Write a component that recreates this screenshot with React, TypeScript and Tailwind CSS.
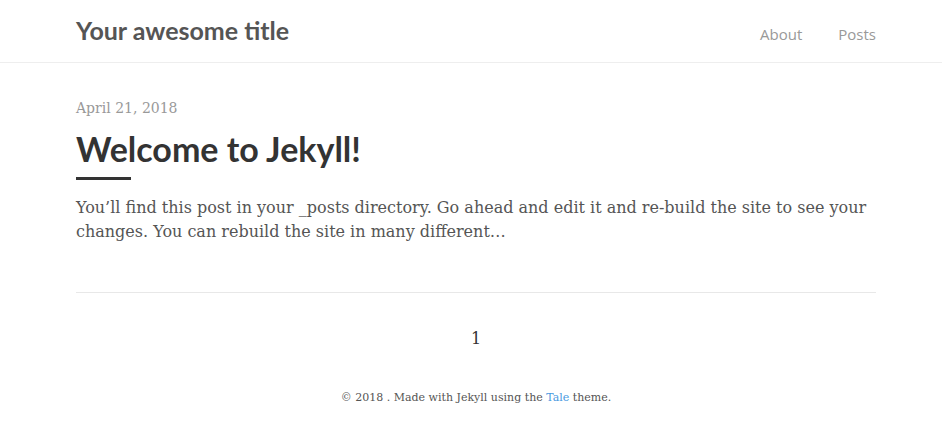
const serif = "font-['DejaVu_Serif','Liberation_Serif',serif]";

const App = () => {
  return (
    <div className="min-h-screen bg-white">
      {/* 顶部导航 */}
      <header className="h-[63px] border-b border-[#eeeeee]">
        <div className="ml-[76px] flex h-full w-[800px] items-center justify-between">
          <a className="font-['Lato',sans-serif] text-[25px] font-bold text-[#555555]">Your awesome title</a>
          <nav className="flex gap-[36px] pt-[6px] font-['Open_Sans',sans-serif] text-[15px] text-[#999999]">
            <a>About</a>
            <a>Posts</a>
          </nav>
        </div>
      </header>

      <main className="ml-[76px] w-[800px]">
        <div className="pt-[35px]">
          <div className={`${serif} text-[14px] text-[#999999]`}>April 21, 2018</div>
          <h1 className="mt-[10px] font-['Lato',sans-serif] text-[34px] leading-[40px] font-bold text-[#333333]">
            Welcome to Jekyll!
          </h1>
          <div className="mt-[8px] h-[3px] w-[55px] bg-[#333333]" />
          <p className={`${serif} mt-[16px] text-[16px] leading-[24px] text-[#555555]`}>
            You’ll find this post in your _posts directory. Go ahead and edit it and re-build the site to see your
            changes. You can rebuild the site in many different…
          </p>
        </div>

        <hr className="mt-[48px] border-[#e8e8e8]" />

        <div className={`${serif} mt-[34px] text-center text-[16px] text-[#333333]`}>1</div>

        <footer className={`${serif} mt-[39px] text-center text-[11px] text-[#555555]`}>
          © 2018 . Made with Jekyll using the <a className="text-[#4a9ae1]">Tale</a> theme.
        </footer>
      </main>
    </div>
  );
};

export default App;
